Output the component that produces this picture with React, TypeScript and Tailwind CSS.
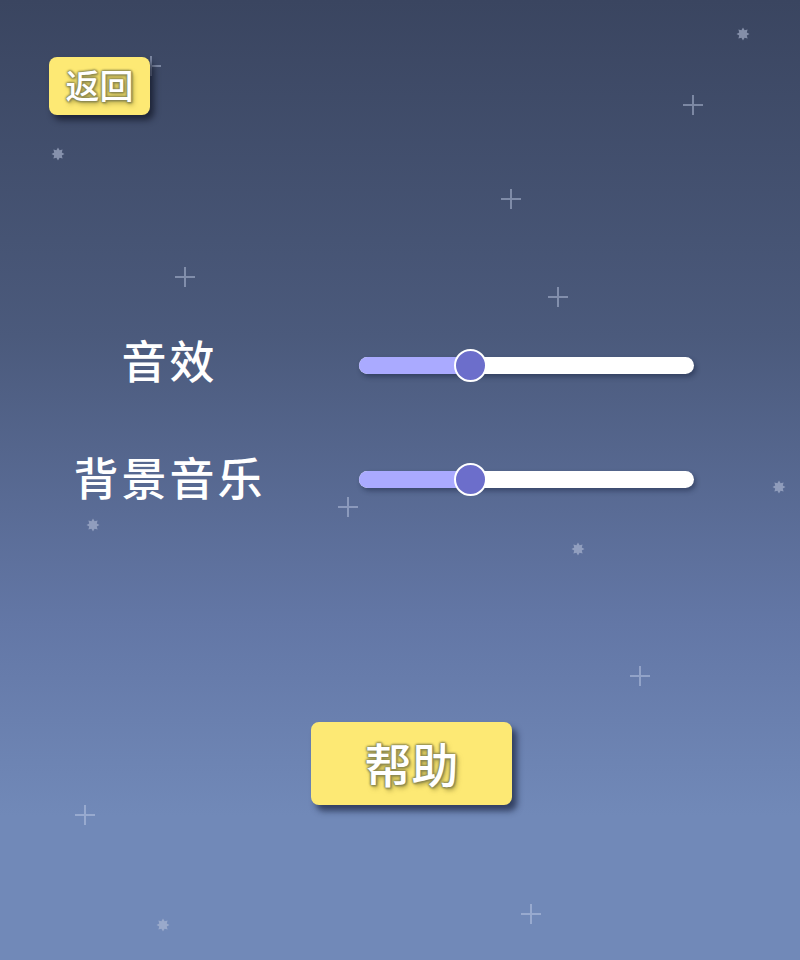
import React from "react";

const pluses: [number, number][] = [
  [151, 66], [693, 105], [511, 199], [185, 277], [558, 297], [348, 507], [640, 676], [85, 815], [531, 914],
];
const stars: [number, number][] = [
  [743, 34], [58, 154], [93, 525], [578, 549], [779, 487], [163, 925],
];

function Plus({ x, y }: { x: number; y: number }) {
  return (
    <svg className="absolute pointer-events-none" style={{ left: x - 11, top: y - 11 }} width="22" height="22" viewBox="0 0 22 22">
      <path d="M11 1V21M1 11H21" stroke="rgba(200,210,235,0.45)" strokeWidth="2" />
    </svg>
  );
}

function Star({ x, y }: { x: number; y: number }) {
  return (
    <svg className="absolute pointer-events-none" style={{ left: x - 8, top: y - 8 }} width="16" height="16" viewBox="0 0 16 16">
      <polygon
        points="8,1.5 9.6,4.2 12.6,3.4 11.8,6.4 14.5,8 11.8,9.6 12.6,12.6 9.6,11.8 8,14.5 6.4,11.8 3.4,12.6 4.2,9.6 1.5,8 4.2,6.4 3.4,3.4 6.4,4.2"
        fill="rgba(180,190,215,0.6)"
      />
    </svg>
  );
}

function Slider() {
  return (
    <div className="relative w-[335px] h-[17px] rounded-full bg-white shadow-[2px_3px_5px_rgba(20,30,60,0.45)]">
      <div className="absolute left-0 top-0 h-full w-[112px] rounded-l-full bg-[#aaaaff]" />
      <div className="absolute left-[95px] top-[-8px] w-[33px] h-[33px] rounded-full bg-[#6c6ecb] border-2 border-white" />
    </div>
  );
}

const outline =
  "[text-shadow:0_0_2px_#8d8a52,0_0_2px_#8d8a52,0_0_3px_#8d8a52,0_0_3px_#8d8a52,1px_1px_2px_#8d8a52,2px_3px_5px_rgba(120,110,40,0.6)]";

export default function App() {
  return (
    <div
      className="relative w-[800px] h-[960px] overflow-hidden bg-[linear-gradient(180deg,#3a4560_0%,#4b5a7c_35%,#6377a6_65%,#7189b8_85%,#7189b8_100%)]"
      style={{ fontFamily: '"Noto Sans CJK SC", "Noto Sans", sans-serif' }}
    >
      {pluses.map(([x, y], i) => (
        <Plus key={"p" + i} x={x} y={y} />
      ))}
      {stars.map(([x, y], i) => (
        <Star key={"s" + i} x={x} y={y} />
      ))}

      <div className="relative pt-[57px] pl-[49px]">
        <button
          className={`w-[101px] h-[58px] rounded-[8px] bg-[#fde974] text-white text-[34px] font-medium leading-none flex items-center justify-center pb-[2px] shadow-[4px_5px_6px_rgba(15,20,35,0.7)] ${outline}`}
        >
          返回
        </button>
      </div>

      <div className="relative mt-[222px] flex flex-col gap-[72px]">
        <div className="flex items-center">
          <div className="w-[335px] pl-[4px] text-center text-white text-[45px] font-medium leading-none tracking-[3px]">音效</div>
          <div className="pl-[24px] pt-[12px]">
            <Slider />
          </div>
        </div>
        <div className="flex items-center">
          <div className="w-[335px] pl-[4px] text-center text-white text-[45px] font-medium leading-none tracking-[3px]">背景音乐</div>
          <div className="pl-[24px] pt-[6px]">
            <Slider />
          </div>
        </div>
      </div>

      <div className="relative mt-[223px] flex justify-center pl-[23px]">
        <button
          className={`w-[201px] h-[83px] rounded-[8px] bg-[#fde974] text-white text-[47px] font-medium leading-none flex items-center justify-center pb-[2px] shadow-[5px_6px_6px_rgba(30,40,70,0.75)] ${outline}`}
        >
          帮助
        </button>
      </div>
    </div>
  );
}
